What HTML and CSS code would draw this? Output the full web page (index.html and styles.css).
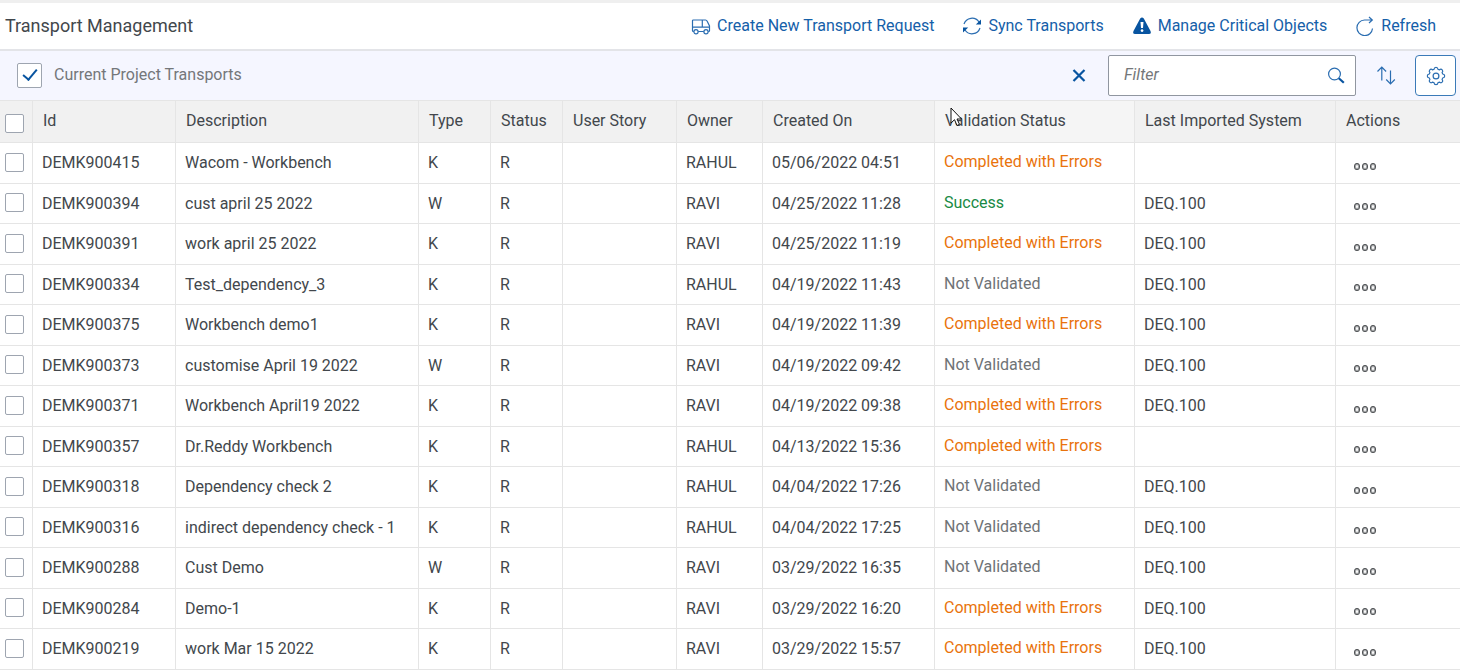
FILE: index.html
```html
<!DOCTYPE html>
<html lang="en">
<head>
<meta charset="utf-8">
<title>Transport Management</title>
<link rel="stylesheet" href="styles.css">
</head>
<body>
<header class="page-header">
  <h1 class="page-title">Transport Management</h1>
  <div class="header-actions">
    <button class="link-button" type="button">
      <svg class="icon" viewBox="0 0 20 20"><path d="M2.800 15.500H2.300a.8.800 0 0 1-.8-.8V4.800a.8.800 0 0 1 .8-.8H14.500Q15.600 4 16.200 5.200L18.500 10v4.700a.8.800 0 0 1-.8.800H17.200M7.200 15.500H12.800M11.300 4v7M1.500 11.200H18.500"/><circle cx="5" cy="15.800" r="2.100"/><circle cx="15" cy="15.800" r="2.100"/></svg>
      <span>Create New Transport Request</span>
    </button>
    <button class="link-button" type="button">
      <svg class="icon" viewBox="0 0 20 20"><path d="M2 8A8.400 8.400 0 0 1 17 6M18 12A8.400 8.400 0 0 1 3 14"/><path class="solid" d="M19 3.500v5h-5.200zM1 16.500v-5h5.200z"/></svg>
      <span>Sync Transports</span>
    </button>
    <button class="link-button" type="button">
      <svg class="icon" viewBox="0 0 20 20"><path class="solid" fill-rule="evenodd" d="M8.200 2.500q1.800-2 3.600 0L18.500 15q1.200 3-1.500 3H3Q.3 18 1.500 15zM8.500 6l.5 6h2l.5-6zM10 13.200a1.400 1.400 0 1 0 .1 0z"/></svg>
      <span>Manage Critical Objects</span>
    </button>
    <button class="link-button" type="button">
      <svg class="icon" viewBox="0 0 20 20"><path d="M17.500 12.500A7.800 7.800 0 1 1 9.500 4H17M14 1l3.300 3L14 7"/></svg>
      <span>Refresh</span>
    </button>
  </div>
</header>

<main>
  <div class="toolbar">
    <label class="project-toggle"><input class="check check-large" type="checkbox" checked><span>Current Project Transports</span></label>
    <div class="toolbar-tools">
      <button class="tool-button" type="button" aria-label="Clear">
        <svg class="icon icon-close" viewBox="0 0 20 20"><path d="M4.500 4l11 11M15.500 4l-11 11"/></svg>
      </button>
      <div class="search">
        <input class="search-input" type="text" placeholder="Filter" aria-label="Filter">
        <button class="search-button" type="button" aria-label="Search">
          <svg class="icon" viewBox="0 0 20 20"><circle cx="8.500" cy="8" r="5.900"/><path class="handle" d="M12.800 12.300l5 4.500"/></svg>
        </button>
      </div>
      <button class="tool-button" type="button" aria-label="Sort">
        <svg class="icon" viewBox="0 0 20 20"><path d="M5.800 14.500V1.500M1.500 5.500l4.300-4.300 4.300 4.300M14.500 4.500v13.200M10.200 13.500l4.300 4.300 4.300-4.300"/></svg>
      </button>
      <button class="tool-button tool-button-framed" type="button" aria-label="Settings">
        <svg class="icon" viewBox="0 0 20 20"><circle cx="10" cy="10" r="2.900"/><path d="M8 3.300Q8.200 1.300 10 1.300T12 3.300L13.300 3.900Q15 2.600 16.200 3.800T16.100 6.700L16.700 8Q18.700 8.200 18.700 10T16.700 12L16.100 13.300Q17.400 15 16.200 16.200T13.300 16.100L12 16.700Q11.800 18.700 10 18.700T8 16.700L6.700 16.100Q5 17.400 3.800 16.200T3.900 13.300L3.300 12Q1.300 11.800 1.300 10T3.300 8L3.900 6.700Q2.600 5 3.800 3.800T6.700 3.900z"/></svg>
      </button>
    </div>
  </div>

  <table class="transports">
    <colgroup>
      <col class="col-select"><col class="col-id"><col class="col-description"><col class="col-type"><col class="col-status"><col class="col-story"><col class="col-owner"><col class="col-created"><col class="col-validation"><col class="col-system"><col class="col-actions">
    </colgroup>
    <thead>
      <tr><th class="select"><input class="check" type="checkbox" aria-label="Select all"></th><th>Id</th><th>Description</th><th>Type</th><th>Status</th><th>User Story</th><th>Owner</th><th>Created On</th><th class="hovered">Validation Status<svg class="cursor" viewBox="0 0 12 20"><path d="M1 1v15l3.500-3.300L7 18.500l2.500-1.200L7 12h4.500z"/></svg></th><th>Last Imported System</th><th>Actions</th></tr>
    </thead>
    <tbody>
      <tr><td class="select"><input class="check" type="checkbox" aria-label="Select DEMK900415"></td><td>DEMK900415</td><td>Wacom - Workbench</td><td>K</td><td>R</td><td></td><td>RAHUL</td><td>05/06/2022 04:51</td><td class="state warning">Completed with Errors</td><td></td><td class="actions"><button class="more" type="button" aria-label="More"><i></i><i></i><i></i></button></td></tr>
      <tr><td class="select"><input class="check" type="checkbox" aria-label="Select DEMK900394"></td><td>DEMK900394</td><td>cust april 25 2022</td><td>W</td><td>R</td><td></td><td>RAVI</td><td>04/25/2022 11:28</td><td class="state success">Success</td><td>DEQ.100</td><td class="actions"><button class="more" type="button" aria-label="More"><i></i><i></i><i></i></button></td></tr>
      <tr><td class="select"><input class="check" type="checkbox" aria-label="Select DEMK900391"></td><td>DEMK900391</td><td>work april 25 2022</td><td>K</td><td>R</td><td></td><td>RAVI</td><td>04/25/2022 11:19</td><td class="state warning">Completed with Errors</td><td>DEQ.100</td><td class="actions"><button class="more" type="button" aria-label="More"><i></i><i></i><i></i></button></td></tr>
      <tr><td class="select"><input class="check" type="checkbox" aria-label="Select DEMK900334"></td><td>DEMK900334</td><td>Test_dependency_3</td><td>K</td><td>R</td><td></td><td>RAHUL</td><td>04/19/2022 11:43</td><td class="state">Not Validated</td><td>DEQ.100</td><td class="actions"><button class="more" type="button" aria-label="More"><i></i><i></i><i></i></button></td></tr>
      <tr><td class="select"><input class="check" type="checkbox" aria-label="Select DEMK900375"></td><td>DEMK900375</td><td>Workbench demo1</td><td>K</td><td>R</td><td></td><td>RAVI</td><td>04/19/2022 11:39</td><td class="state warning">Completed with Errors</td><td>DEQ.100</td><td class="actions"><button class="more" type="button" aria-label="More"><i></i><i></i><i></i></button></td></tr>
      <tr><td class="select"><input class="check" type="checkbox" aria-label="Select DEMK900373"></td><td>DEMK900373</td><td>customise April 19 2022</td><td>W</td><td>R</td><td></td><td>RAVI</td><td>04/19/2022 09:42</td><td class="state">Not Validated</td><td>DEQ.100</td><td class="actions"><button class="more" type="button" aria-label="More"><i></i><i></i><i></i></button></td></tr>
      <tr><td class="select"><input class="check" type="checkbox" aria-label="Select DEMK900371"></td><td>DEMK900371</td><td>Workbench April19 2022</td><td>K</td><td>R</td><td></td><td>RAVI</td><td>04/19/2022 09:38</td><td class="state warning">Completed with Errors</td><td>DEQ.100</td><td class="actions"><button class="more" type="button" aria-label="More"><i></i><i></i><i></i></button></td></tr>
      <tr><td class="select"><input class="check" type="checkbox" aria-label="Select DEMK900357"></td><td>DEMK900357</td><td>Dr.Reddy Workbench</td><td>K</td><td>R</td><td></td><td>RAHUL</td><td>04/13/2022 15:36</td><td class="state warning">Completed with Errors</td><td></td><td class="actions"><button class="more" type="button" aria-label="More"><i></i><i></i><i></i></button></td></tr>
      <tr><td class="select"><input class="check" type="checkbox" aria-label="Select DEMK900318"></td><td>DEMK900318</td><td>Dependency check 2</td><td>K</td><td>R</td><td></td><td>RAHUL</td><td>04/04/2022 17:26</td><td class="state">Not Validated</td><td>DEQ.100</td><td class="actions"><button class="more" type="button" aria-label="More"><i></i><i></i><i></i></button></td></tr>
      <tr><td class="select"><input class="check" type="checkbox" aria-label="Select DEMK900316"></td><td>DEMK900316</td><td>indirect dependency check - 1</td><td>K</td><td>R</td><td></td><td>RAHUL</td><td>04/04/2022 17:25</td><td class="state">Not Validated</td><td>DEQ.100</td><td class="actions"><button class="more" type="button" aria-label="More"><i></i><i></i><i></i></button></td></tr>
      <tr><td class="select"><input class="check" type="checkbox" aria-label="Select DEMK900288"></td><td>DEMK900288</td><td>Cust Demo</td><td>W</td><td>R</td><td></td><td>RAVI</td><td>03/29/2022 16:35</td><td class="state">Not Validated</td><td>DEQ.100</td><td class="actions"><button class="more" type="button" aria-label="More"><i></i><i></i><i></i></button></td></tr>
      <tr><td class="select"><input class="check" type="checkbox" aria-label="Select DEMK900284"></td><td>DEMK900284</td><td>Demo-1</td><td>K</td><td>R</td><td></td><td>RAVI</td><td>03/29/2022 16:20</td><td class="state warning">Completed with Errors</td><td>DEQ.100</td><td class="actions"><button class="more" type="button" aria-label="More"><i></i><i></i><i></i></button></td></tr>
      <tr><td class="select"><input class="check" type="checkbox" aria-label="Select DEMK900219"></td><td>DEMK900219</td><td>work Mar 15 2022</td><td>K</td><td>R</td><td></td><td>RAVI</td><td>03/29/2022 15:57</td><td class="state warning">Completed with Errors</td><td>DEQ.100</td><td class="actions"><button class="more" type="button" aria-label="More"><i></i><i></i><i></i></button></td></tr>
    </tbody>
  </table>
</main>
</body>
</html>
```

FILE: styles.css
```css
*, *::before, *::after { box-sizing: border-box; }

body {
  margin: 0;
  background: #fff;
  color: #42474c;
  font: 16px/20px Roboto, "Liberation Sans", sans-serif;
}

button, input { font: inherit; color: inherit; }

button {
  display: flex;
  align-items: center;
  padding: 0;
  border: 0;
  background: none;
}

.page-header {
  display: flex;
  align-items: center;
  justify-content: space-between;
  height: 51px;
  padding: 0 24px 0 5px;
  border-top: 3px solid #efefef;
  border-bottom: 2px solid #e3e4e8;
}

.page-title {
  margin: 0;
  font-size: 18px;
  font-weight: 400;
  line-height: 24px;
}

.header-actions { display: flex; gap: 28px; }

.link-button { gap: 6px; color: #1560a9; white-space: nowrap; }

.icon {
  flex: none;
  width: 20px;
  height: 20px;
  fill: none;
  stroke: #2a6db1;
  stroke-width: 1.2;
}

.icon .solid { fill: #0854a0; stroke: none; }
.icon .handle { stroke: #0854a0; stroke-width: 2.2; }
.icon-close { stroke: #0854a0; stroke-width: 2.2; }

.toolbar {
  display: flex;
  align-items: center;
  justify-content: space-between;
  height: 49px;
  padding: 0 4px 0 17px;
  background: #f5f6ff;
}

.project-toggle {
  display: flex;
  align-items: center;
  gap: 12px;
  color: #74777a;
}

.project-toggle span { padding-bottom: 2px; }

.check {
  appearance: none;
  display: block;
  width: 19px;
  height: 19px;
  margin: 0;
  border: 1px solid #9ea5b0;
  border-radius: 2px;
  background: #fff;
}

.check-large { width: 25px; height: 25px; }

.check-large:checked::before {
  content: "";
  display: block;
  width: 8px;
  height: 14px;
  margin: 2px 0 0 8px;
  border: solid #0854a0;
  border-width: 0 2px 2px 0;
  transform: rotate(40deg);
}

.toolbar-tools { display: flex; align-items: center; gap: 9px; }

.tool-button { justify-content: center; width: 41px; height: 41px; }

.tool-button-framed {
  border: 1px solid #3b7ab8;
  border-radius: 4px;
  background: #fff;
}

.search {
  display: flex;
  align-items: center;
  width: 248px;
  height: 41px;
  padding: 0 9px 0 15px;
  border: 1px solid #9096a0;
  border-radius: 2px;
  background: #fff;
}

.search-input {
  flex: 1;
  min-width: 0;
  padding: 0 0 2px;
  border: 0;
  outline: 0;
  background: none;
}

.search-input::placeholder { color: #74777a; font-style: italic; opacity: 1; }

.transports {
  width: 100%;
  border-spacing: 0;
  table-layout: fixed;
}

.col-select { width: 33px; }
.col-id { width: 143px; }
.col-description { width: 243px; }
.col-type, .col-status { width: 72px; }
.col-story { width: 114px; }
.col-owner { width: 86px; }
.col-created { width: 172px; }
.col-validation { width: 200px; }
.col-system { width: 201px; }
.col-actions { width: 124px; }

th, td {
  padding: 0 0 0 9px;
  border-right: 1px solid #e5e5e5;
  border-bottom: 1px solid #e5e5e5;
  text-align: left;
  white-space: nowrap;
}

th:last-child, td:last-child { border-right: 0; }

th {
  height: 43px;
  padding: 0 0 2px 10px;
  border-top: 1px solid #e5e5e5;
  background: #f1f1f1;
  font-weight: 400;
}

th.hovered { position: relative; background: #f5f5f5; }

td { height: 41px; }
tr:nth-child(even) td { height: 40px; }

th.select { padding: 4px 0 0 5px; }
td.select { padding: 0 0 2px 5px; }

td.state { padding-bottom: 2px; color: #6f7376; }
td.warning { color: #e9730c; }
td.success { color: #188a45; }

.cursor {
  position: absolute;
  top: 6px;
  left: 15px;
  width: 12px;
  height: 20px;
  fill: #fff;
  stroke: #111;
}

td.actions { padding: 6px 0 0 18px; }

.more { gap: 2px; }

.more i {
  width: 6px;
  height: 7px;
  border: 1px solid #4a4d50;
  border-radius: 50%;
  box-shadow: inset 0 0 0 1px #a4a6a8;
}
```
